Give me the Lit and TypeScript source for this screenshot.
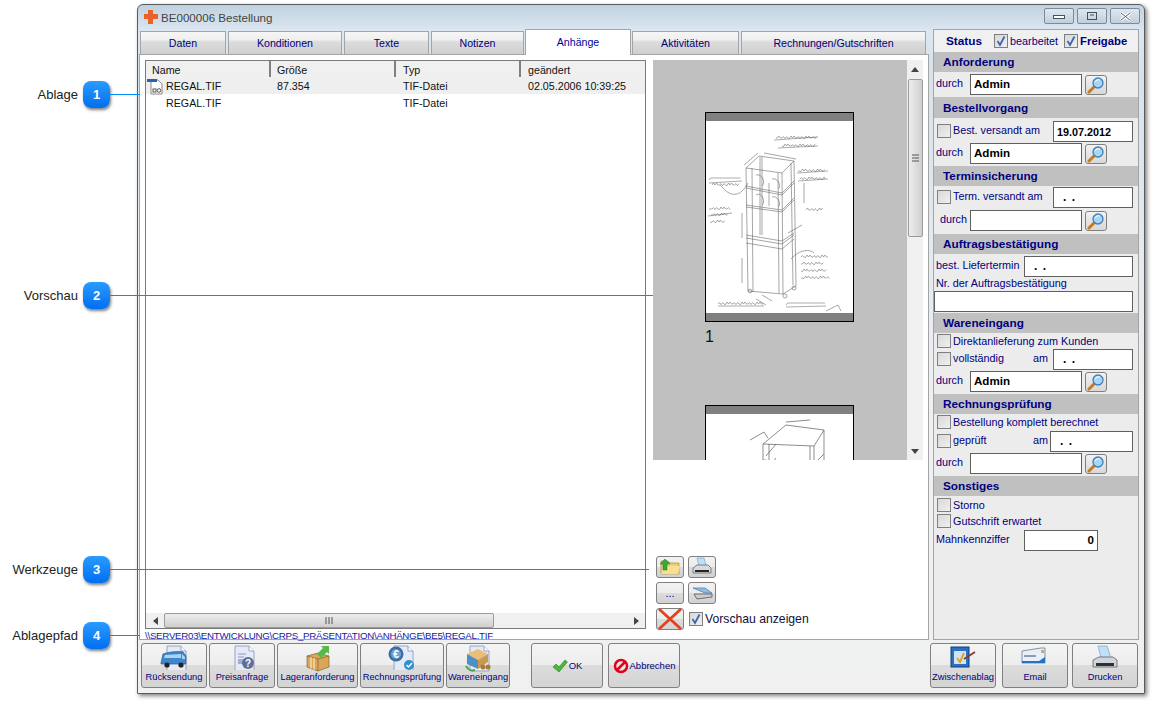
import { LitElement, css, html, svg } from 'lit';
import { customElement } from 'lit/decorators.js';

// pseudo handwriting for the scanned drawing, just wobbly strokes
function scribble(x: number, y: number, w: number, seed = 1) {
    let d = `M${x} ${y}`;
    let s = seed;
    for (let i = 1.5; i < w; i += 1.5) {
        s = (s * 7 + 3) % 11;
        d += `L${(x + i).toFixed(1)} ${(y - (s % 2 ? 2 : 0) + (s % 3 === 0 ? 0.6 : 0)).toFixed(1)}`;
    }
    return d;
}

const notes: [number, number, number][] = [
    [70, 25, 42], [76, 33, 34], [92, 58, 28], [94, 66, 26], [3, 67, 32], [6, 72, 28],
    [3, 96, 22], [5, 102, 18], [4, 109, 16], [100, 97, 18], [95, 144, 28], [95, 151, 24],
    [95, 158, 26], [95, 165, 30], [12, 191, 46], [80, 192, 40],
];

const sketch1 = svg`
    <g transform="translate(0 -8)">
    <g fill="none" stroke="#5c5c5c" stroke-width=".55">
        <path d="M40 55L76 60L88 48L53 43Z M40 55L42 178 M46 55L47 179 M76 60L77 181 M72 60L73 180 M88 48L90 173 M85 50L87 172"/>
        <path d="M40 73L76 80L88 68 M40 75L76 82L88 70 M40 92L76 97L88 85 M40 94L76 99L88 87 M40 122L76 128L88 120 M40 125L76 131L88 122 M40 130L76 136L88 126 M54 44L54 122 M56 44L56 122 M63 70L63 93"/>
        <path d="M42 178L77 181L90 173 M50 62C56 60 60 70 56 73 M66 66C72 64 76 74 72 76 M50 82C56 78 60 90 56 92 M66 84C72 82 76 92 72 94"/>
        <path d="M38 52L52 40 M58 40L90 46 M98 70L98 90 M20 78C30 86 38 78 42 70 M20 78L14 72 M82 120L96 112 M85 146C94 136 104 136 108 140"/>
        <path d="M36 125L36 100 M36 145L36 170 M50 186L60 192 M56 182L66 188"/>
        <circle cx="79" cy="183" r="2"/><circle cx="88" cy="175" r="2"/><circle cx="44" cy="178" r="1.8"/>
        <path d="M120 198L132 192L135 198"/>
    </g>
    <g fill="none" stroke="#444" stroke-width=".45">
        ${notes.map((n, i) => svg`<path d=${scribble(n[0], n[1], n[2], i + 1)}/>`)}
        <path d="M68 27L112 24 M72 35L112 33 M91 60L122 58 M92 68L122 66 M3 70L36 68 M2 103L26 100 M12 193L58 193 M80 194L120 193"/>
    </g>
    </g>`;

const sketch2 = svg`
    <g fill="none" stroke="#5c5c5c" stroke-width=".7">
        <path d="M57 30L80 11L118 16L108 32Z M57 30L57 60 M63 30L63 60 M108 32L108 60 M104 32L104 60 M118 16L118 58"/>
        <path d="M57 46L108 50L118 40 M60 42L70 30 M60 56L70 44 M44 26L58 18L62 24 M80 8L104 6 M62 50L24 54 M8 54L32 54"/>
    </g>`;

const magnifier = html`<svg width="18" height="18" viewBox="0 0 18 18">
    <path d="M8 10L2 16" stroke="#c77a20" stroke-width="3" stroke-linecap="round"/>
    <circle cx="11" cy="7" r="5" fill="#a9d4f2" stroke="#3d7fb8" stroke-width="1.3"/>
    <path d="M8 6C9 4 11 3.500 13 4" stroke="#fff" fill="none"/>
</svg>`;

const docBack = svg`<path d="M7 2H21L26 7V27H7Z" fill="#e6eaf6" stroke="#9aa3c0"/><path d="M21 2V7H26" fill="#fff" stroke="#9aa3c0"/>`;

const icons: Record<string, unknown> = {
    van: html`<svg width="28" height="26" viewBox="0 0 28 26">${docBack}
        <path d="M1 19L3 10C8 8 17 7 23 8L26 12V20H1Z" fill="#3f87cc" stroke="#245a94" stroke-width=".7"/>
        <path d="M5 11L21 10V14H4Z M22 10L25 13V15H22Z" fill="#a9d3f2"/>
        <circle cx="7" cy="21" r="2.600" fill="#222"/><circle cx="21" cy="21" r="2.600" fill="#222"/></svg>`,
    quote: html`<svg width="28" height="26" viewBox="0 0 28 26">${docBack}
        <path d="M10 10H18M10 13H16" stroke="#8d97b8"/><rect x="10" y="15" width="6" height="5" fill="#9fb0d0"/>
        <circle cx="20" cy="19" r="6" fill="#5c6f99"/><text x="20" y="23" text-anchor="middle" class="ico-t">?</text></svg>`,
    box: html`<svg width="30" height="28" viewBox="0 0 30 28">
        <path d="M4 12L15 9L26 12V23L15 27L4 23Z" fill="#d9a75a" stroke="#8a6228" stroke-width=".7"/>
        <path d="M4 12L15 15L26 12M15 15V27" fill="none" stroke="#8a6228" stroke-width=".7"/>
        <path d="M8 13.200V24.500M11 14V25.500" stroke="#f3dfb4" stroke-width="1.400"/>
        <path d="M14 10L20 4L18 2H26V10L24 8L18 14Z" fill="#57b947"/></svg>`,
    invoice: html`<svg width="30" height="26" viewBox="0 0 30 26">${docBack}
        <circle cx="9" cy="10" r="7.500" fill="#3a6ea5"/><circle cx="9" cy="10" r="5" fill="#6fa3cf"/>
        <text x="9" y="13.500" text-anchor="middle" class="ico-e">€</text>
        <circle cx="22" cy="21" r="5" fill="#2f8fd0"/><path d="M19.500 21L21.500 23L25 19" stroke="#fff" stroke-width="1.500" fill="none"/></svg>`,
    goods: html`<svg width="30" height="28" viewBox="0 0 30 28">${docBack}
        <path d="M4 10L15 5L25 10L15 16Z" fill="#e8bf74"/><path d="M4 10V20L15 25V16Z" fill="#4f8fc7"/><path d="M25 10V18L15 25V16Z" fill="#c89a50"/>
        <path d="M3 22C5 26 9 27 12 26" stroke="#45a84a" stroke-width="2" fill="none"/>
        <circle cx="20" cy="23" r="2.500" fill="#a87b3a"/><circle cx="25" cy="23" r="2.500" fill="#a87b3a"/></svg>`,
    clip: html`<svg width="28" height="26" viewBox="0 0 28 26">
        <rect x="2" y="3" width="18" height="20" fill="#2a6fc4" stroke="#103f7d"/><rect x="5" y="7" width="12" height="13" fill="#cfe4f7"/>
        <path d="M8 14L11 18L15 9" stroke="#e0a520" stroke-width="2" fill="none"/>
        <path d="M15 15L26 8" stroke="#8a3c30" stroke-width="2"/></svg>`,
    mail: html`<svg width="28" height="22" viewBox="0 0 28 22">
        <path d="M1 7L20 4H24V19H1Z" fill="#e8eff6" stroke="#7d93ab"/><path d="M3 12H15" stroke="#8a9db2" stroke-width="2"/>
        <path d="M1 17H18L24 13V19H1Z" fill="#2373c8"/><path d="M20 6H23V9H20Z" fill="#c9ab5a"/></svg>`,
    printer: html`<svg width="30" height="28" viewBox="0 0 30 28">
        <path d="M8 2H17L21 14H11Z" fill="#bfe0f7" stroke="#7aa3c4" stroke-width=".7"/>
        <path d="M3 16L9 13H23L27 16V23H3Z" fill="#d2d4d8" stroke="#5c6066" stroke-width=".8"/>
        <path d="M6 19H24V22H6Z" fill="#2d3036"/></svg>`,
    folder: html`<svg width="22" height="20" viewBox="0 0 22 20">
        <path d="M2 4H9L11 6H20V17H2Z" fill="#f0cf6a" stroke="#b08d2c" stroke-width=".7"/>
        <path d="M2 17L5 9H21L19 17Z" fill="#f7e092"/>
        <path d="M1 7L6 2L11 7H8V13H4V7Z" fill="#3aa83e" stroke="#1f7a25" stroke-width=".5"/></svg>`,
    printerSmall: html`<svg width="22" height="20" viewBox="0 0 22 20">
        <path d="M6 1H13L15 9H8Z" fill="#c4def3" stroke="#7ea5c4" stroke-width=".7"/>
        <path d="M2 11L6 8H17L20 11V16H2Z" fill="#d8dadd" stroke="#666" stroke-width=".8"/><path d="M4 13H18V15H4Z" fill="#222"/></svg>`,
    scanner: html`<svg width="22" height="18" viewBox="0 0 22 18">
        <path d="M2 4L14 4L21 9L14 9Z" fill="#8fbde2" stroke="#4b78a0" stroke-width=".7"/>
        <path d="M3 10L15 10L21 10V13L6 15Z" fill="#c9ccd0" stroke="#555" stroke-width=".8"/></svg>`,
    cross: html`<svg width="26" height="22" viewBox="0 0 26 22">
        <path d="M2 1L24 21M24 1L2 21" stroke="#e2431e" stroke-width="2.800"/></svg>`,
    check: html`<svg width="16" height="14" viewBox="0 0 16 14">
        <path d="M1 8L4 5L7 8L13 1L15.500 3L7 13Z" fill="#4db53c" stroke="#2a8022" stroke-width=".6"/></svg>`,
    stop: html`<svg width="16" height="16" viewBox="0 0 16 16">
        <circle cx="8" cy="8" r="6" fill="#e8e8e8" stroke="#e3001b" stroke-width="2.500"/><path d="M4 12L12 4" stroke="#e3001b" stroke-width="2.500"/></svg>`,
};

const tabs: [string, number][] = [
    ['Daten', 86], ['Konditionen', 114], ['Texte', 85], ['Notizen', 93],
    ['Anhänge', 106], ['Aktivitäten', 107], ['Rechnungen/Gutschriften', 185],
];

const actionsLeft: [string, string, number][] = [
    ['Rücksendung', 'van', 66], ['Preisanfrage', 'quote', 66], ['Lageranforderung', 'box', 81],
    ['Rechnungsprüfung', 'invoice', 84], ['Wareneingang', 'goods', 64],
];
const actionsRight: [string, string, number][] = [
    ['Zwischenablag', 'clip', 66], ['Email', 'mail', 66], ['Drucken', 'printer', 66],
];

// y of the line, x where the line stops
const callouts: [string, number, number, number][] = [
    ['Ablage', 1, 94, 140], ['Vorschau', 2, 295, 653], ['Werkzeuge', 3, 569, 649], ['Ablagepfad', 4, 635, 140],
];

@customElement('app-root')
export class AppRoot extends LitElement {
    static styles = css`
        :host{
            display: block;
            position: relative;
            width: 1153px;
            height: 702px;
            overflow: hidden;
            background: #fff;
            font-family: "Liberation Sans", Arial, sans-serif;
            font-size: 10.7px;
            color: #111;
            padding: 4px 0 0 137px;
            box-sizing: border-box;
        }

        .window{
            width: 1008px;
            height: 690px;
            box-sizing: border-box;
            border: 1px solid #5a5a5a;
            border-radius: 6px 6px 0 0;
            box-shadow: 2px 2px 4px rgba(0,0,0,.5);
            background: linear-gradient(#bfd1e0 0, #dce7f1 26px, #d6e2ec 60px, #eef0f2 400px, #f0f0f0 100%);
            display: flex;
            flex-direction: column;
        }

        .title{
            height: 24px;
            display: flex;
            align-items: center;
            padding-left: 5px;
            gap: 2px;
            font-size: 11.6px;
            color: #444;
        }
        .caps{
            margin-left: auto;
            margin-right: 4px;
            display: flex;
            gap: 3px;
            align-self: flex-start;
            margin-top: 3px;
        }
        .cap{
            width: 30px;
            height: 16px;
            box-sizing: border-box;
            border: 1px solid #7b8b99;
            border-radius: 2px;
            background: linear-gradient(#dfe8f0, #c0cfdc);
            display: flex;
            align-items: center;
            justify-content: center;
        }

        .main{
            height: 611px;
            display: flex;
            gap: 4px;
            padding-left: 1px;
        }
        .left{
            width: 790px;
            display: flex;
            flex-direction: column;
        }

        .tabs{
            height: 25px;
            display: flex;
            align-items: flex-end;
            gap: 2px;
            padding-left: 1px;
        }
        .tab{
            height: 23px;
            box-sizing: border-box;
            border: 1px solid #a4a4a4;
            border-bottom: none;
            background: linear-gradient(#f6f6f6 0, #efefef 35%, #dcdcdc 45%, #cfcfcf 100%);
            color: #00007a;
            display: flex;
            align-items: center;
            justify-content: center;
            font-size: 10.6px;
        }
        .tab.active{
            height: 26px;
            margin: 0 -1px -1px -1px;
            background: #fff;
            color: #0000a0;
            border: 1.500px solid #a4a4a4;
            border-bottom: none;
            padding-bottom: 2px;
            position: relative;
            z-index: 1;
        }

        .sheet{
            flex: 1;
            min-height: 0;
            box-sizing: border-box;
            border: 1px solid #a4a4a4;
            background: #fff;
            padding: 5px 5px 0;
            display: flex;
            flex-direction: column;
        }
        .upper{
            height: 570px;
            flex: none;
            display: flex;
            gap: 7px;
        }

        .list{
            width: 501px;
            height: 569px;
            box-sizing: border-box;
            border: 1.500px solid #7a7a7a;
            display: flex;
            flex-direction: column;
        }
        .row-list{
            display: grid;
            grid-template-columns: 125px 125px 125px 1fr;
            height: 17px;
            align-items: center;
        }
        .row-list.head{
            height: 16px;
            background: #f0f0f0;
        }
        .row-list.head span{
            height: 100%;
            display: flex;
            align-items: center;
            box-sizing: border-box;
            padding: 1px 0 0 6px;
            border-right: 2px solid #808080;
        }
        .row-list.head span:last-child{
            border-right: none;
        }
        .row-list.sel{
            background: #efefef;
        }
        .cell{
            padding: 1px 0 0 6px;
        }
        .cell:nth-child(n+3), .row-list.head span:nth-child(n+3){
            padding-left: 7px;
        }
        .cell.name{
            padding-left: 20px;
            position: relative;
        }
        .file-icon{
            position: absolute;
            left: 1px;
            top: 0;
        }
        .list-fill{
            flex: 1;
        }
        .hscroll{
            height: 15px;
            display: flex;
            align-items: center;
            background: #f0f0f0;
        }
        .arrow-btn{
            width: 18px;
            flex: none;
            display: flex;
            align-items: center;
            justify-content: center;
        }
        .hthumb{
            width: 330px;
            height: 15px;
            box-sizing: border-box;
            border: 1px solid #9a9a9a;
            border-radius: 2px;
            background: linear-gradient(#eeeeee, #cfcfcf);
            display: flex;
            align-items: center;
            justify-content: center;
        }
        .hfill{
            flex: 1;
        }

        .side{
            width: 270px;
            display: flex;
            flex-direction: column;
        }
        .preview{
            height: 400px;
            display: flex;
            overflow: hidden;
        }
        .pages{
            width: 254px;
            background: #c0c0c0;
            padding: 52px 0 0 52px;
            box-sizing: border-box;
            overflow: hidden;
        }
        .page{
            width: 149px;
            height: 210px;
            box-sizing: border-box;
            border: 1px solid #000;
            background: #fff;
            display: flex;
            flex-direction: column;
            justify-content: space-between;
            overflow: hidden;
        }
        .band{
            height: 8px;
            background: #808080;
            flex: none;
        }
        .page svg{
            flex: 1;
            min-height: 0;
            display: block;
        }
        .page-no{
            height: 83px;
            font-size: 16px;
            line-height: 30px;
            color: #111;
        }
        .vscroll{
            width: 16px;
            background: #f0f0f0;
            display: flex;
            flex-direction: column;
            align-items: center;
        }
        .vup{
            height: 19px;
            display: flex;
            align-items: center;
        }
        .vthumb{
            width: 15px;
            height: 158px;
            box-sizing: border-box;
            border: 1px solid #9a9a9a;
            border-radius: 2px;
            background: linear-gradient(90deg, #eeeeee, #cfcfcf);
            display: flex;
            align-items: center;
            justify-content: center;
        }
        .vdown{
            margin-top: auto;
            height: 18px;
            display: flex;
            align-items: center;
        }

        .tools{
            margin-top: auto;
            padding-left: 3px;
            display: flex;
            flex-direction: column;
            gap: 4px;
        }
        .tool-row{
            display: flex;
            align-items: center;
            gap: 4px;
        }
        .tool{
            width: 28px;
            height: 22px;
            box-sizing: border-box;
            border: 1px solid #808080;
            border-radius: 3px;
            background: linear-gradient(#f2f2f2 0, #ececec 48%, #dbdbdb 52%, #d2d2d2 100%);
            display: flex;
            align-items: center;
            justify-content: center;
            color: #0000c0;
        }
        .show{
            display: flex;
            align-items: center;
            gap: 2px;
            margin-left: 1px;
            font-size: 12.200px;
            color: #10103a;
        }

        .path{
            height: 9px;
            line-height: 11px;
            color: #1020a8;
            font-size: 9.700px;
            letter-spacing: -.25px;
            white-space: nowrap;
        }

        .status{
            width: 206px;
            box-sizing: border-box;
            border: 1px solid #a4a4a4;
            background: #ececec;
            color: #000080;
            font-size: 10.800px;
        }
        .status-top{
            height: 22px;
            background: #f0f0f0;
            display: flex;
            align-items: center;
            padding-left: 12px;
        }
        .status-top b{
            font-size: 11.800px;
            margin-right: 12px;
        }
        .status-top .flag{
            margin-left: 6px;
        }
        .status-top .release{
            font-weight: bold;
            font-size: 11.300px;
            margin-left: 2px;
        }
        .sec{
            height: 20px;
            background: #c0c0c0;
            display: flex;
            align-items: center;
            padding-left: 9px;
            font-weight: bold;
            font-size: 11.800px;
            box-sizing: border-box;
        }
        .sec.tall{
            height: 21px;
        }
        .line{
            display: flex;
            align-items: center;
            padding: 0 5px 0 3px;
        }
        .line.plain{
            padding-left: 2px;
        }
        .line.flush{
            padding-left: 0;
        }
        .line > span{
            padding-bottom: 4px;
        }
        .line > .check{
            padding-bottom: 0;
            margin-bottom: 2px;
        }
        .line.h16 > span:not(.check), .line.h15 > span:not(.check), .line.h14 > span:not(.check){
            padding-bottom: 2px;
        }
        .h21{ height: 21px; }
        .h16{ height: 16px; }
        .h15{ height: 15px; }
        .h14{ height: 14px; }
        .pt1{ margin-top: 1px; }
        .pt2{ margin-top: 2px; }
        .pt3{ margin-top: 3px; }
        .mb1{ margin-bottom: 1px; }
        .mb2{ margin-bottom: 2px; }
        .mb3{ margin-bottom: 3px; }
        .lbl-check{
            margin-left: 2px;
        }
        .durch{
            width: 34px;
        }
        .durch.inset{
            width: 30px;
            padding-left: 4px;
        }
        .am{
            margin-left: auto;
        }
        .field{
            height: 21px;
            box-sizing: border-box;
            border: 1px solid #606060;
            background: #fff;
            color: #000;
            font-weight: bold;
            display: flex;
            align-items: center;
            padding: 0 0 2px 3px;
            font-size: 11.600px;
        }
        .w112{ width: 112px; }
        .w80{ width: 80px; }
        .w83{ width: 83px; }
        .w109{ width: 109px; }
        .w199{ width: 199px; }
        .w74{ width: 74px; }
        .push{ margin-left: auto; }
        .after-am{ margin-left: 5px; }
        .after-am.near{ margin-left: 2px; }
        .date{
            font-size: 10.800px;
            padding-bottom: 0;
        }
        .blank{
            padding-left: 9px;
            font-size: 12px;
            word-spacing: 2px;
        }
        .num{
            justify-content: flex-end;
            padding-right: 3px;
        }
        .wide-label{
            width: 88px;
        }
        .find{
            width: 22px;
            height: 20px;
            margin-left: 3px;
            box-sizing: border-box;
            border: 1px solid #808080;
            border-radius: 3px;
            background: linear-gradient(#f2f2f2, #d8d8d8);
            display: flex;
            align-items: center;
            justify-content: center;
        }
        .check{
            width: 14px;
            height: 14px;
            flex: none;
            box-sizing: border-box;
            border: 1px solid #7f7f7f;
            background: linear-gradient(135deg, #d8d8d8, #f0f0f0);
            display: flex;
            align-items: center;
            justify-content: center;
        }

        .actions{
            height: 45px;
            margin-top: 3px;
            padding: 0 6px 0 3px;
            display: flex;
            align-items: stretch;
            gap: 2px;
        }
        .act{
            box-sizing: border-box;
            border: 1.500px solid #808080;
            border-radius: 3px;
            background: linear-gradient(#f4f4f4 0, #ededed 48%, #dcdcdc 50%, #d4d4d4 100%);
            color: #00007a;
            font-size: 9.300px;
            display: flex;
            flex-direction: column;
            align-items: center;
            justify-content: flex-end;
            padding-bottom: 5px;
            overflow: hidden;
            white-space: nowrap;
        }
        .act svg{
            margin-bottom: auto;
            flex: none;
        }
        .act.big{
            width: 72px;
            flex-direction: row;
            justify-content: center;
            gap: 1px;
            padding-bottom: 0;
            font-size: 9.500px;
        }
        .act.big svg{
            margin-bottom: 0;
        }
        .ok{
            margin-left: 19px;
        }
        .cancel{
            margin-left: 3px;
        }
        .right{
            margin-left: auto;
            display: flex;
            gap: 4px;
        }
        .right .act:first-child{
            margin-right: 2px;
        }

        .ico-t, .ico-e{
            font: bold 10px "Liberation Sans", sans-serif;
            fill: #fff;
        }

        .callout{
            position: absolute;
            left: 0;
            height: 28px;
            display: flex;
            align-items: center;
            z-index: 2;
        }
        .callout-label{
            width: 78px;
            text-align: right;
            font-size: 13px;
            color: #222;
        }
        .badge{
            width: 27px;
            height: 27px;
            margin-left: 5px;
            flex: none;
            border-radius: 8px;
            background: linear-gradient(#2a9bff, #006ff0);
            box-shadow: 1px 2px 3px rgba(0,0,0,.5);
            color: #fff;
            font-weight: bold;
            font-size: 13px;
            display: flex;
            align-items: center;
            justify-content: center;
        }
        .callout-line{
            flex: 1;
            height: 1px;
            background: #0090f8;
        }
    `;

    private box(checked = false) {
        return html`<span class="check">${checked
            ? html`<svg width="12" height="12" viewBox="0 0 12 12"><path d="M2.500 6L5 10L9.500 1.500" stroke="#3c66b0" stroke-width="1.800" fill="none"/></svg>`
            : null}</span>`;
    }

    private who(name = '', inset = false) {
        return html`<span class="durch ${inset ? 'inset' : ''}">durch</span>
            <div class="field w112">${name}</div>
            <div class="find">${magnifier}</div>`;
    }

    private action(a: [string, string, number]) {
        return html`<div class="act" style="width:${a[2]}px">${icons[a[1]]}<span>${a[0]}</span></div>`;
    }

    private renderList() {
        return html`<div class="list">
            <div class="row-list head"><span>Name</span><span>Größe</span><span>Typ</span><span>geändert</span></div>
            <div class="row-list sel">
                <div class="cell name">
                    <svg class="file-icon" width="17" height="16" viewBox="0 0 17 16">
                        <path d="M4 1H11L15 5V15H4Z" fill="#fff" stroke="#8a8a8a"/>
                        <rect x="0" y="0" width="10" height="3" fill="#2a62b0"/>
                        <rect x="6" y="10" width="3" height="3" fill="none" stroke="#555"/><circle cx="12" cy="11.500" r="1.800" fill="none" stroke="#555"/>
                    </svg>REGAL.TIF</div>
                <div class="cell">87.354</div><div class="cell">TIF-Datei</div><div class="cell">02.05.2006 10:39:25</div>
            </div>
            <div class="row-list">
                <div class="cell name">REGAL.TIF</div><div class="cell"></div><div class="cell">TIF-Datei</div><div class="cell"></div>
            </div>
            <div class="list-fill"></div>
            <div class="hscroll">
                <div class="arrow-btn"><svg width="5" height="8"><path d="M5 0V8L0 4Z" fill="#444"/></svg></div>
                <div class="hthumb"><svg width="9" height="7"><path d="M1 0V7M4 0V7M7 0V7" stroke="#555"/></svg></div>
                <div class="hfill"></div>
                <div class="arrow-btn"><svg width="5" height="8"><path d="M0 0V8L5 4Z" fill="#444"/></svg></div>
            </div>
        </div>`;
    }

    private renderSide() {
        return html`<div class="side">
            <div class="preview">
                <div class="pages">
                    <div class="page"><div class="band"></div><svg viewBox="0 0 147 192" preserveAspectRatio="none">${sketch1}</svg><div class="band"></div></div>
                    <div class="page-no">1</div>
                    <div class="page"><div class="band"></div><svg viewBox="0 0 147 192" preserveAspectRatio="none">${sketch2}</svg><div class="band"></div></div>
                </div>
                <div class="vscroll">
                    <div class="vup"><svg width="8" height="5"><path d="M0 5H8L4 0Z" fill="#444"/></svg></div>
                    <div class="vthumb"><svg width="7" height="9"><path d="M0 1H7M0 4H7M0 7H7" stroke="#555"/></svg></div>
                    <div class="vdown"><svg width="8" height="5"><path d="M0 0H8L4 5Z" fill="#444"/></svg></div>
                </div>
            </div>
            <div class="tools">
                <div class="tool-row"><div class="tool">${icons.folder}</div><div class="tool">${icons.printerSmall}</div></div>
                <div class="tool-row"><div class="tool">...</div><div class="tool">${icons.scanner}</div></div>
                <div class="tool-row"><div class="tool">${icons.cross}</div>
                    <div class="show">${this.box(true)}<span>Vorschau anzeigen</span></div>
                </div>
            </div>
        </div>`;
    }

    private renderStatus() {
        return html`<div class="status">
            <div class="status-top">
                <b>Status</b>${this.box(true)}<span class="lbl-check">bearbeitet</span>
                <span class="flag">${this.box(true)}</span><span class="release">Freigabe</span>
            </div>

            <div class="sec">Anforderung</div>
            <div class="line plain h21 pt2 mb2">${this.who('Admin')}</div>

            <div class="sec tall">Bestellvorgang</div>
            <div class="line h21 pt3">${this.box()}<span class="lbl-check">Best. versandt am</span><div class="field w80 push date">19.07.2012</div></div>
            <div class="line plain h21 pt1 mb2">${this.who('Admin')}</div>

            <div class="sec">Terminsicherung</div>
            <div class="line h21 pt1">${this.box()}<span class="lbl-check">Term. versandt am</span><div class="field w80 push blank">. .</div></div>
            <div class="line plain h21 pt2 mb3">${this.who('', true)}</div>

            <div class="sec">Auftragsbestätigung</div>
            <div class="line plain h21 pt2"><span>best. Liefertermin</span><div class="field w109 push blank">. .</div></div>
            <div class="line plain h14"><span>Nr. der Auftragsbestätigung</span></div>
            <div class="line flush h21 mb1"><div class="field w199"></div></div>

            <div class="sec">Wareneingang</div>
            <div class="line h15 pt1">${this.box()}<span class="lbl-check">Direktanlieferung zum Kunden</span></div>
            <div class="line h21">${this.box()}<span class="lbl-check">vollständig</span><span class="am">am</span><div class="field w80 after-am blank">. .</div></div>
            <div class="line plain h21 pt1 mb2">${this.who('Admin')}</div>

            <div class="sec">Rechnungsprüfung</div>
            <div class="line h16 pt1">${this.box()}<span class="lbl-check">Bestellung komplett berechnet</span></div>
            <div class="line h21">${this.box()}<span class="lbl-check">geprüft</span><span class="am">am</span><div class="field w83 after-am near blank">. .</div></div>
            <div class="line plain h21 pt1 mb2">${this.who()}</div>

            <div class="sec">Sonstiges</div>
            <div class="line h16 pt2">${this.box()}<span class="lbl-check">Storno</span></div>
            <div class="line h16">${this.box()}<span class="lbl-check">Gutschrift erwartet</span></div>
            <div class="line plain h21"><span class="wide-label">Mahnkennziffer</span><div class="field w74 num">0</div></div>
        </div>`;
    }

    render() {
        return html`
        <div class="window">
            <div class="title">
                <svg width="16" height="16" viewBox="0 0 16 16"><path d="M5 1H10V5H15V10H10V15H5V10H1V5H5Z" fill="#e8622a"/></svg>
                <span>BE000006 Bestellung</span>
                <div class="caps">
                    <div class="cap"><svg width="12" height="6"><rect x=".5" y="2.500" width="11" height="3" fill="#fff" stroke="#44525e"/></svg></div>
                    <div class="cap"><svg width="10" height="8"><rect x=".5" y=".5" width="9" height="7" fill="none" stroke="#44525e"/><path d="M3 3H7" stroke="#44525e"/></svg></div>
                    <div class="cap"><svg width="13" height="9"><path d="M2 1L11 8M11 1L2 8" stroke="#fff" stroke-width="3"/><path d="M2 1L11 8M11 1L2 8" stroke="#55626e"/></svg></div>
                </div>
            </div>

            <div class="main">
                <div class="left">
                    <div class="tabs">
                        ${tabs.map(t => html`<div class="tab ${t[0] === 'Anhänge' ? 'active' : ''}" style="width:${t[1]}px">${t[0]}</div>`)}
                    </div>
                    <div class="sheet">
                        <div class="upper">${this.renderList()}${this.renderSide()}</div>
                        <div class="path">\\\\SERVER03\\ENTWICKLUNG\\CRPS_PRÄSENTATION\\ANHÄNGE\\BE5\\REGAL.TIF</div>
                    </div>
                </div>
                ${this.renderStatus()}
            </div>

            <div class="actions">
                ${actionsLeft.map(a => this.action(a))}
                <div class="act big ok">${icons.check}<span>OK</span></div>
                <div class="act big cancel">${icons.stop}<span>Abbrechen</span></div>
                <div class="right">${actionsRight.map(a => this.action(a))}</div>
            </div>
        </div>

        ${callouts.map(c => html`
            <div class="callout" style="top:${c[2] - 14}px;width:${c[3]}px">
                <span class="callout-label">${c[0]}</span>
                <span class="badge">${c[1]}</span>
                <span class="callout-line"></span>
            </div>`)}
        `;
    }
}
